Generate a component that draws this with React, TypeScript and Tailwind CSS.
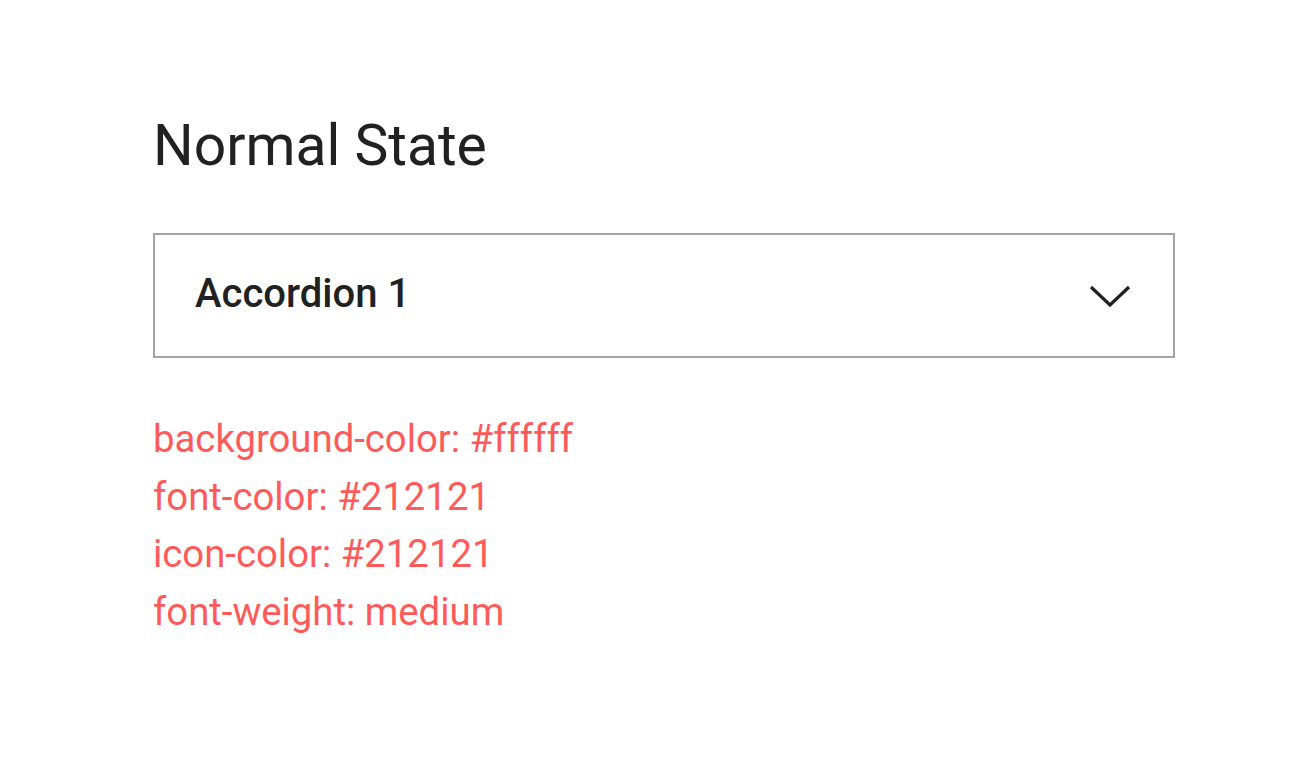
import React from "react";

const SPECS = [
  "background-color: #ffffff",
  "font-color: #212121",
  "icon-color: #212121",
  "font-weight: medium",
];

export default function App() {
  return (
    <div className="min-h-screen bg-white font-['Roboto',sans-serif] text-[#212121]">
      <div className="pl-[153px] pt-[108px] w-[1175px]">
        <h1 className="text-[57px] leading-[76px] font-normal">Normal State</h1>

        <button className="mt-[49px] flex h-[125px] w-full items-center justify-between border-2 border-[#a3a3a3] pl-[40px] pr-[42px] text-left">
          <span className="pb-[4px] text-[40px] font-medium">Accordion 1</span>
          <svg width="42" height="24" viewBox="0 0 42 24" fill="none">
            <path d="M2 3 L21 21 L40 3" stroke="#212121" strokeWidth="3.2" />
          </svg>
        </button>

        <ul className="mt-[52px] text-[38.3px] leading-[57.5px] text-[#ff5a5a]">
          {SPECS.map((s) => (
            <li key={s}>{s}</li>
          ))}
        </ul>
      </div>
    </div>
  );
}
